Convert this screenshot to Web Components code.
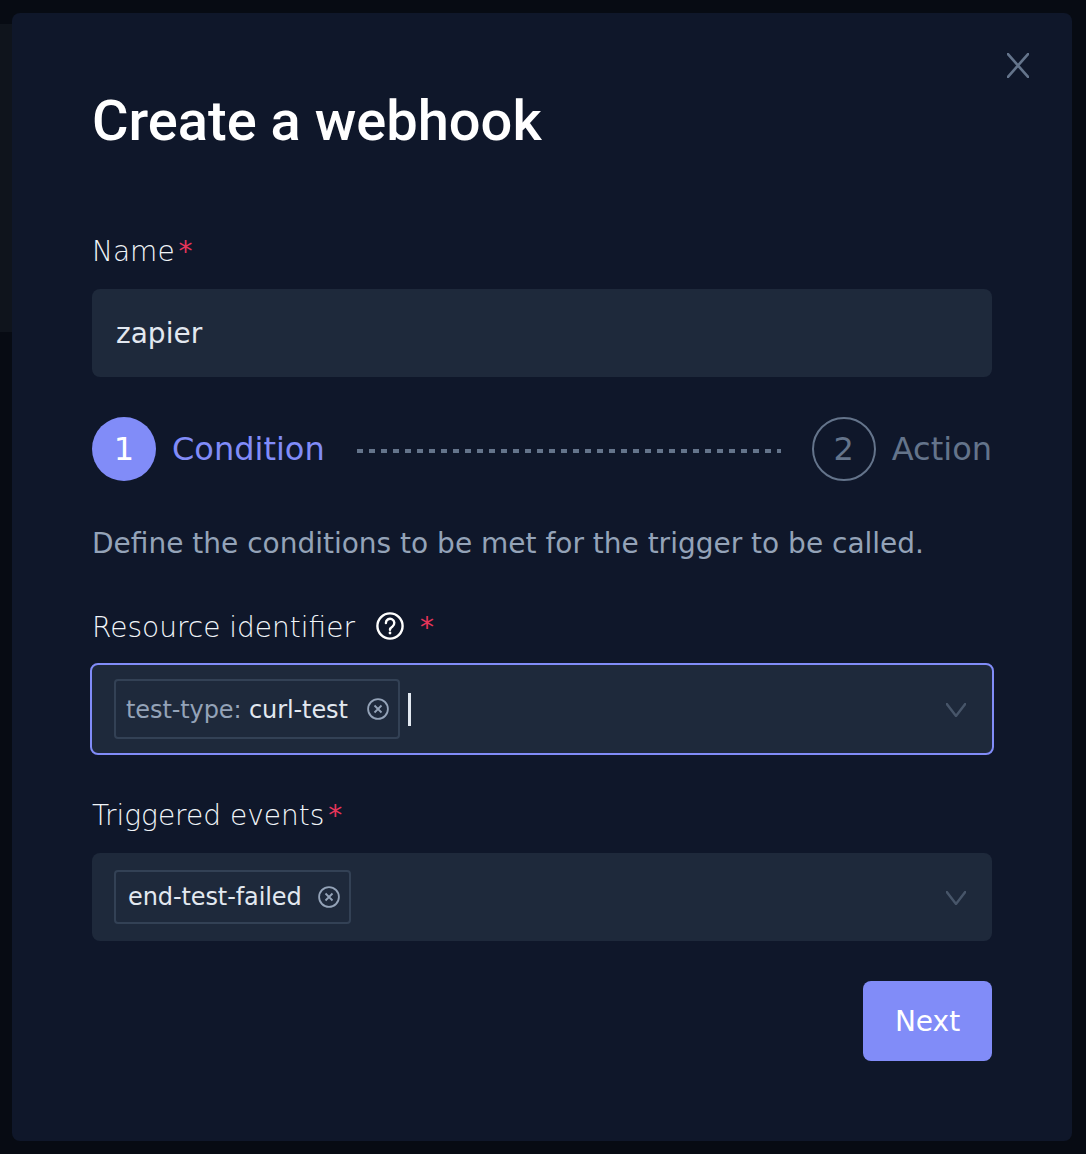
<!DOCTYPE html>
<html>
<head>
<meta charset="utf-8">
<title>Create a webhook</title>
<style>
  html, body { margin: 0; height: 100%; background: #070b13; }
</style>
</head>
<body>
<webhook-modal>
  <form-field label="Name">
    <text-box value="zapier"></text-box>
  </form-field>
  <step-bar></step-bar>
  <step-hint>Define the conditions to be met for the trigger to be called.</step-hint>
  <form-field label="Resource identifier" help>
    <tag-select focused>
      <tag-chip key="test-type:" value="curl-test"></tag-chip>
    </tag-select>
  </form-field>
  <form-field label="Triggered events">
    <tag-select>
      <tag-chip value="end-test-failed"></tag-chip>
    </tag-select>
  </form-field>
</webhook-modal>

<script>
const FONT = '"DejaVu Sans", sans-serif';

class WebhookModal extends HTMLElement {
  constructor() {
    super();
    const shadowRoot = this.attachShadow({ mode: 'open' });
    shadowRoot.innerHTML = `
      <style>
        :host {
          display: block;
          position: relative;
          box-sizing: border-box;
          height: 1154px;
          padding: 13px 14px 13px 12px;
          font-family: ${FONT};
        }
        .behind {
          position: absolute;
          left: 0;
          top: 24px;
          width: 12px;
          height: 308px;
          background: #0f141c;
        }
        .dialog {
          position: relative;
          box-sizing: border-box;
          height: 1128px;
          padding: 0 80px;
          background: #0f172a;
          border-radius: 8px;
        }
        .close {
          position: absolute;
          top: 40px;
          right: 43px;
          width: 22px;
          height: 25px;
          display: block;
        }
        h1 {
          margin: 0 0 78px;
          padding-top: 76px;
          font: 500 56px/64px Roboto, sans-serif;
          color: #fff;
        }
        .footer {
          display: flex;
          justify-content: flex-end;
        }
        button {
          width: 129px;
          height: 80px;
          border: 0;
          border-radius: 8px;
          background: #818cf8;
          color: #fff;
          font: 400 28px ${FONT};
          padding: 0;
        }
      </style>
      <div class="behind"></div>
      <div class="dialog">
        <svg class="close" viewBox="0 0 22 25" fill="none" stroke="#64748b" stroke-width="2.6">
          <path d="M-2 -2.3 L24 27.3 M24 -2.3 L-2 27.3"></path>
        </svg>
        <h1>Create a webhook</h1>
        <slot></slot>
        <div class="footer"><button>Next</button></div>
      </div>
    `;
  }
}

class FormField extends HTMLElement {
  constructor() {
    super();
    const shadowRoot = this.attachShadow({ mode: 'open' });
    const help = this.hasAttribute('help');
    shadowRoot.innerHTML = `
      <style>
        :host {
          display: block;
          margin-bottom: 40px;
        }
        .label {
          display: flex;
          align-items: center;
          height: 40px;
          margin-bottom: 18px;
          font-size: 28px;
          font-weight: 200;
          color: #f1f5f9;
        }
        .help {
          width: 28px;
          height: 28px;
          margin: -2px 0 0 21px;
        }
        .star {
          margin-left: 4px;
          font-weight: 400;
          color: #e6355a;
        }
        .help + .star {
          margin-left: 16px;
        }
      </style>
      <div class="label">
        <span>${this.getAttribute('label')}</span>
        ${help ? `<svg class="help" viewBox="0 0 28 28" fill="none" stroke="#fff" stroke-width="2.4">
          <circle cx="14" cy="14" r="12.6"></circle>
          <path d="M9.9 11 a4.2 4.2 0 1 1 6.6 3.4 c-1.6 1 -2.5 1.7 -2.5 3.4" stroke-linecap="round"></path>
          <circle cx="14" cy="21" r="1.4" fill="#fff" stroke="none"></circle>
        </svg>` : ''}
        <span class="star">*</span>
      </div>
      <slot></slot>
    `;
  }
}

class TextBox extends HTMLElement {
  constructor() {
    super();
    const shadowRoot = this.attachShadow({ mode: 'open' });
    shadowRoot.innerHTML = `
      <style>
        :host {
          display: flex;
          align-items: center;
          box-sizing: border-box;
          height: 88px;
          padding: 0 24px;
          background: #1e293b;
          border-radius: 8px;
          font-size: 28px;
          color: #e2e8f0;
        }
      </style>
      ${this.getAttribute('value')}
    `;
  }
}

class StepBar extends HTMLElement {
  constructor() {
    super();
    const shadowRoot = this.attachShadow({ mode: 'open' });
    shadowRoot.innerHTML = `
      <style>
        :host {
          display: flex;
          align-items: center;
          margin-bottom: 43px;
          font-size: 32px;
        }
        .dot {
          display: flex;
          align-items: center;
          justify-content: center;
          box-sizing: border-box;
          width: 64px;
          height: 64px;
          border-radius: 50%;
        }
        .on .dot { background: #818cf8; color: #fff; }
        .off .dot { border: 2px solid #64748b; color: #64748b; }
        .step {
          display: flex;
          align-items: center;
          gap: 16px;
        }
        .on { color: #818cf8; }
        .off { color: #64748b; }
        .line {
          flex: 1;
          height: 4px;
          margin: 4px 31px 0 32px;
          background: repeating-linear-gradient(90deg, #64748b 0 6px, transparent 6px 12px);
        }
      </style>
      <div class="step on"><span class="dot">1</span><span>Condition</span></div>
      <div class="line"></div>
      <div class="step off"><span class="dot">2</span><span>Action</span></div>
    `;
  }
}

class StepHint extends HTMLElement {
  constructor() {
    super();
    const shadowRoot = this.attachShadow({ mode: 'open' });
    shadowRoot.innerHTML = `
      <style>
        :host {
          display: block;
          margin-bottom: 43px;
          font-size: 28px;
          line-height: 40px;
          color: #94a3b8;
        }
      </style>
      <slot></slot>
    `;
  }
}

class TagSelect extends HTMLElement {
  constructor() {
    super();
    const shadowRoot = this.attachShadow({ mode: 'open' });
    const focused = this.hasAttribute('focused');
    shadowRoot.innerHTML = `
      <style>
        :host {
          display: flex;
          align-items: center;
          box-sizing: border-box;
          height: 88px;
          padding: 0 26px 0 22px;
          background: #1e293b;
          border-radius: 8px;
        }
        :host([focused]) {
          margin: -2px -2px 0;
          height: 92px;
          border: 2px solid #818cf8;
        }
        .caret {
          width: 3px;
          height: 33px;
          margin-left: 8px;
          background: #e2e8f0;
        }
        .chevron {
          display: block;
          width: 20px;
          height: 14px;
          margin: 2px 0 0 auto;
        }
      </style>
      <slot></slot>
      ${focused ? '<span class="caret"></span>' : ''}
      <svg class="chevron" viewBox="0 0 20 14" fill="none" stroke="#475569" stroke-width="2.4">
        <path d="M-1 -1.4 L10 13 L21 -1.4"></path>
      </svg>
    `;
  }
}

class TagChip extends HTMLElement {
  constructor() {
    super();
    const shadowRoot = this.attachShadow({ mode: 'open' });
    const key = this.getAttribute('key');
    shadowRoot.innerHTML = `
      <style>
        :host {
          display: inline-flex;
          align-items: center;
          box-sizing: border-box;
          height: ${key ? 60 : 54}px;
          padding: 0 9px 0 ${key ? 10 : 12}px;
          border: 2px solid #334155;
          border-radius: 4px;
          font-size: 24px;
          letter-spacing: -0.1px;
          color: #e2e8f0;
          white-space: pre;
        }
        .key { color: #94a3b8; }
        span { margin-top: ${key ? 2 : 0}px; }
        svg {
          width: 22px;
          height: 22px;
          margin-left: ${key ? 19 : 16}px;
        }
      </style>
      ${key ? `<span class="key">${key} </span>` : ''}<span>${this.getAttribute('value')}</span>
      <svg viewBox="0 0 22 22" fill="none" stroke="#94a3b8" stroke-width="1.8">
        <circle cx="11" cy="11" r="9.9"></circle>
        <path d="M7.5 7.5 L14.5 14.5 M14.5 7.5 L7.5 14.5"></path>
      </svg>
    `;
  }
}

customElements.define('webhook-modal', WebhookModal);
customElements.define('form-field', FormField);
customElements.define('text-box', TextBox);
customElements.define('step-bar', StepBar);
customElements.define('step-hint', StepHint);
customElements.define('tag-select', TagSelect);
customElements.define('tag-chip', TagChip);
</script>
</body>
</html>
